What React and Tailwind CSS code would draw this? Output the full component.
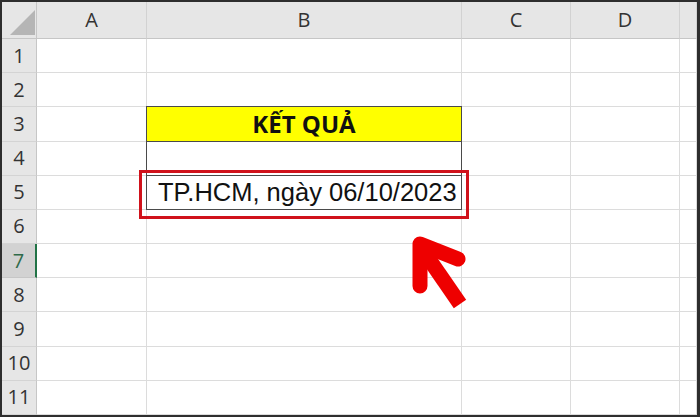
import React from "react";

const cols = ["A", "B", "C", "D", ""];
const rows = [1, 2, 3, 4, 5, 6, 7, 8, 9, 10, 11];

function Cell({ row, col }) {
  // B3:B5 có viền đen
  if (col === "B" && row === 3) {
    return (
      <div className="flex items-center justify-center bg-[#ffff00] border border-[#4a4a4a] -ml-px -mt-px">
        <span className="font-['Open_Sans',sans-serif] text-[24px] font-bold text-[#111] leading-none">
          KẾT QUẢ
        </span>
      </div>
    );
  }
  if (col === "B" && row === 4) {
    return <div className="border-x border-b border-[#4a4a4a] -ml-px" />;
  }
  if (col === "B" && row === 5) {
    return (
      <div className="flex items-center border-x border-b border-[#4a4a4a] -ml-px pl-[11px]">
        <span className="font-['Liberation_Sans',Arial,sans-serif] text-[25.5px] text-[#111] leading-none whitespace-nowrap">
          TP.HCM, ngày 06/10/2023
        </span>
      </div>
    );
  }
  return <div className="border-r border-b border-[#dcdcdc]" />;
}

export default function App() {
  return (
    <div className="w-[700px] h-[417px] bg-[#2e2e2e] pt-[2px] pl-[2px] pr-[3px] pb-[2px]">
      <div className="relative w-full h-full bg-white overflow-hidden">
        <div className="grid h-full grid-cols-[35px_110px_315px_109px_109px_1fr] grid-rows-[37px_repeat(11,1fr)]">
          {/* góc chọn tất cả */}
          <div className="relative bg-[#e6e6e6] border-r border-b border-[#c6c6c6]">
            <svg className="absolute left-[8px] top-[8px]" width="25" height="25" viewBox="0 0 25 25">
              <polygon points="0,25 25,25 25,0" fill="#b5b5b5" />
            </svg>
          </div>
          {cols.map((c, i) => (
            <div
              key={"h" + i}
              className="flex items-center justify-center bg-[#e6e6e6] border-r border-b border-r-[#d2d2d2] border-b-[#c6c6c6] font-['Open_Sans',sans-serif] text-[20px] text-[#333]"
            >
              {c}
            </div>
          ))}
          {rows.map((r) => (
            <React.Fragment key={r}>
              <div
                className={
                  r === 7
                    ? "flex items-center justify-center bg-[#d2d2d2] border-b border-[#c6c6c6] border-r-2 border-r-[#217346] font-['Open_Sans',sans-serif] text-[20px] text-[#2f6a4a]"
                    : "flex items-center justify-center bg-[#e6e6e6] border-b border-b-[#d4d4d4] border-r border-r-[#c6c6c6] font-['Open_Sans',sans-serif] text-[20px] text-[#333]"
                }
              >
                {r}
              </div>
              {cols.map((c, i) => (
                <Cell key={r + "-" + i} row={r} col={c || "E"} />
              ))}
            </React.Fragment>
          ))}
        </div>

        {/* khung đỏ đánh dấu */}
        <div className="absolute left-[137px] top-[168px] w-[330px] h-[49px] border-[3px] border-[#d0121b]" />

        {/* mũi tên đỏ */}
        <svg className="absolute left-[398px] top-[222px]" width="80" height="100" viewBox="0 0 80 100">
          <line x1="20" y1="22" x2="60" y2="80" stroke="#ee0000" strokeWidth="15" strokeLinecap="butt" />
          <polyline
            points="58,35 20,20 20,62"
            fill="none"
            stroke="#ee0000"
            strokeWidth="15"
            strokeLinecap="round"
            strokeLinejoin="round"
          />
        </svg>
      </div>
    </div>
  );
}
